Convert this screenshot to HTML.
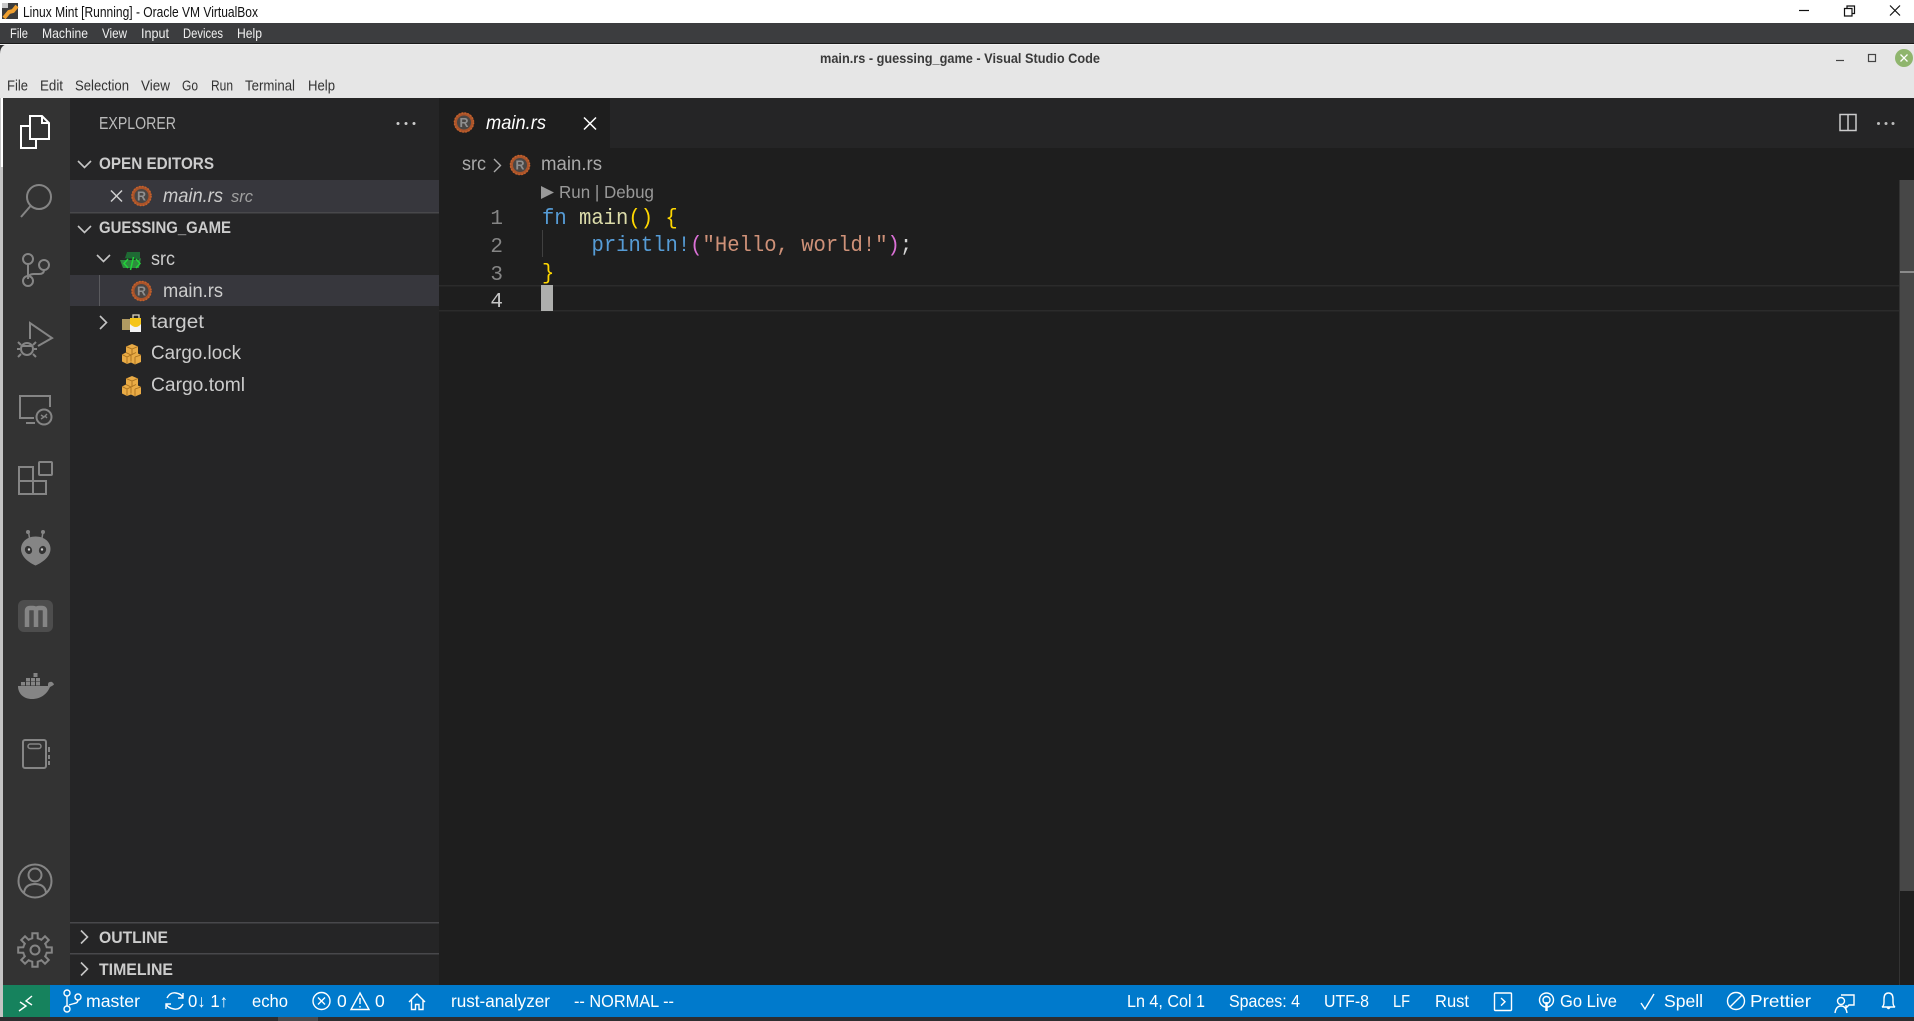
<!DOCTYPE html>
<html lang="en"><head><meta charset="utf-8"><title>main.rs - guessing_game - Visual Studio Code</title>
<style>
html,body{margin:0;padding:0;width:1914px;height:1021px;overflow:hidden;background:#2d2d2f}
svg{display:block}
text{font-family:"Liberation Sans",sans-serif;white-space:pre}
.m{font-family:"Liberation Mono",monospace;font-size:22.6px}
.ln{font-family:"Liberation Mono",monospace;font-size:21px}
.vb{font-size:14px;fill:#f0f0f0}
.mn{font-size:15px;fill:#333}
.sb{font-size:19px;fill:#ccc}
.b{font-size:17px;font-weight:bold;fill:#ccc}
.st{font-size:17.5px;fill:#fff}
.ic{fill:none;stroke:#858585;stroke-width:2}
.w{fill:none;stroke:#fff;stroke-width:1.4}
.ch{fill:none;stroke:#c5c5c5;stroke-width:1.6}
</style></head><body>
<svg width="1914" height="1021" viewBox="0 0 1914 1021" xmlns="http://www.w3.org/2000/svg">
<defs>
<g id="rust"><circle r="8.500" fill="#4a4644" stroke="#a9532a" stroke-width="3"/><circle r="9.500" fill="none" stroke="#c4622c" stroke-width="1.600" stroke-dasharray="1.500 1.500"/><text x="0" y="4.500" text-anchor="middle" style="font-size:12.500px;font-weight:bold;fill:#8f8f8f">R</text></g>
<g id="cargo">
<path d="M10 0l6 2.500v7l3 1.500v7l-6 2.500-4-2-4 1.500L0 17.500v-7l4-2v-6z" fill="#e9ab45"/>
<path d="M4 2.500l6 2.500 6-2.500M10 5v6M4 8.500l5 2.500 5-2.500M0 10.500l5 2.500v6.500M5 13l4-2M9 11v6.500M13 13l6-2M13 13v7" stroke="#a8701e" stroke-width=".9" fill="none"/>
</g>
<path id="t" d="M-4.59-11.09L-2.7-11.69L-2.66-16.79L2.66-16.79L2.7-11.69L4.59-11.09"/>
</defs>

<!-- VirtualBox chrome -->
<rect width="1914" height="1021" fill="#2d2d2f"/>
<rect width="1914" height="23" fill="#fff"/>
<rect x="2" y="3" width="16" height="16" fill="#3c3c3c"/>
<rect x="2" y="3" width="6" height="5" fill="#c9c9c9"/>
<path d="M4 18L9 12L13 11L17 6" stroke="#f0a030" stroke-width="4" fill="none"/>
<text x="23" y="17" textLength="235" lengthAdjust="spacingAndGlyphs" style="font-size:14.5px;fill:#111">Linux Mint [Running] - Oracle VM VirtualBox</text>
<path d="M1799 10.500h10" stroke="#111" stroke-width="1.200"/>
<path d="M1844.500 8.500h7.500v7.500h-7.500z M1847 8.500v-2.500h7.500v7.500h-2.500" fill="none" stroke="#111" stroke-width="1.200"/>
<path d="M1890 5.500l10 10M1900 5.500l-10 10" stroke="#111" stroke-width="1.200"/>
<rect y="23" width="1914" height="20" fill="#3c3d3f"/>
<text class="vb" x="10" y="38" textLength="18" lengthAdjust="spacingAndGlyphs">File</text>
<text class="vb" x="42" y="38" textLength="46" lengthAdjust="spacingAndGlyphs">Machine</text>
<text class="vb" x="102" y="38" textLength="25" lengthAdjust="spacingAndGlyphs">View</text>
<text class="vb" x="141" y="38" textLength="28" lengthAdjust="spacingAndGlyphs">Input</text>
<text class="vb" x="183" y="38" textLength="40" lengthAdjust="spacingAndGlyphs">Devices</text>
<text class="vb" x="237" y="38" textLength="25" lengthAdjust="spacingAndGlyphs">Help</text>

<!-- Mint window title -->
<rect y="43" width="1914" height="2" fill="#1a1a1a"/>
<path d="M0 98V54Q0 44 10 44H1914V98z" fill="#e6e6e6"/>
<rect y="44" width="1914" height="1" fill="#f2f2f2"/>
<text x="960" y="63" text-anchor="middle" textLength="280" lengthAdjust="spacingAndGlyphs" style="font-size:14px;font-weight:bold;fill:#3a3a3a">main.rs - guessing_game - Visual Studio Code</text>
<path d="M1836 60.500h8" stroke="#444" stroke-width="1.200"/>
<rect x="1868.500" y="54.500" width="7" height="7" fill="none" stroke="#444" stroke-width="1.200"/>
<circle cx="1904" cy="58" r="9" fill="#8fb56d"/>
<path d="M1900.500 54.500l7 7M1907.500 54.500l-7 7" stroke="#fff" stroke-width="1.300"/>
<text class="mn" x="7" y="90.500" textLength="21" lengthAdjust="spacingAndGlyphs">File</text>
<text class="mn" x="40" y="90.500" textLength="23" lengthAdjust="spacingAndGlyphs">Edit</text>
<text class="mn" x="75" y="90.500" textLength="54" lengthAdjust="spacingAndGlyphs">Selection</text>
<text class="mn" x="141" y="90.500" textLength="29" lengthAdjust="spacingAndGlyphs">View</text>
<text class="mn" x="182" y="90.500" textLength="16" lengthAdjust="spacingAndGlyphs">Go</text>
<text class="mn" x="211" y="90.500" textLength="22" lengthAdjust="spacingAndGlyphs">Run</text>
<text class="mn" x="245" y="90.500" textLength="50" lengthAdjust="spacingAndGlyphs">Terminal</text>
<text class="mn" x="308" y="90.500" textLength="27" lengthAdjust="spacingAndGlyphs">Help</text>

<!-- VS Code base -->
<rect x="0" y="98" width="3" height="887" fill="#c4c4c4"/>
<rect x="3" y="98" width="67" height="887" fill="#333"/>
<rect x="70" y="98" width="369" height="887" fill="#252526"/>
<rect x="439" y="98" width="1475" height="887" fill="#1e1e1e"/>
<rect x="439" y="98" width="1475" height="50" fill="#252526"/>
<rect x="439" y="98" width="171" height="50" fill="#1e1e1e"/>
<rect x="1" y="98" width="2" height="69" fill="#fff"/>

<!-- activity icons -->
<g fill="none" stroke="#fff" stroke-width="2">
<path d="M30 126h-9v22h15v-9"/>
<path d="M30 116h12l7 7v16h-19zM42 116v7h7"/>
</g>
<g class="ic">
<circle cx="39" cy="197" r="12"/><path d="M30.500 206L21 217"/>
<circle cx="28" cy="259" r="5"/><circle cx="44" cy="265" r="5"/><circle cx="28" cy="281" r="5"/>
<path d="M28 264v12M44 270q0 4-5 4h-5q-6 0-6 5"/>
<path d="M30 339v-16l22 15-14 8"/>
<circle cx="27" cy="349" r="6"/><path d="M21 345l-3-3M33 345l3-3M20 349h-3M34 349h3M21 354l-3 3M33 354l3 3M22 346h10"/>
<path d="M34 418H20v-22h30v11M26 423h9"/>
<circle cx="44" cy="417" r="7.500"/><path d="M41 415l3 2-3 2M47 414l-2 2 2 2" stroke-width="1.400"/>
<path d="M19 467h14v27H19zM19 481h27v13H33"/>
<rect x="39" y="462" width="13" height="13" rx="1"/>
</g>
<g fill="#858585">
<path d="M35.500 536.500c9 0 15 5.500 15 12.500 0 8-9 14-15 16.500-6-2.500-14.500-8.500-14.500-16.500 0-7 6-12.500 14.500-12.500z"/>
<path d="M28.500 532l1 6M43 532l-1 6" stroke="#858585" stroke-width="1.500"/>
<circle cx="28" cy="532" r="2"/><circle cx="43" cy="532" r="2"/>
</g>
<ellipse cx="28.500" cy="550" rx="3.500" ry="4.200" fill="#333" transform="rotate(-25 28.500 550)"/><ellipse cx="42.500" cy="550" rx="3.500" ry="4.200" fill="#333" transform="rotate(25 42.500 550)"/>
<circle cx="29" cy="549.500" r="1.200" fill="#ccc"/><circle cx="42" cy="549.500" r="1.200" fill="#ccc"/>
<rect x="18" y="600" width="35" height="32" rx="6" fill="#4d4d4d"/>
<path d="M27 627v-16q0-3 3-3h3q3 0 3 3v16M36 611q0-3 3-3h3q3 0 3 3v16" fill="none" stroke="#858585" stroke-width="4.500"/>
<g fill="#858585">
<path d="M18 686h30c0-2 0-4 2-4 2-1 3 1 4 2 0 1-2 2-4 3-3 7-9 12-18 12-8 0-14-5-14-13z"/>
<rect x="21" y="682" width="4" height="3.500"/><rect x="26" y="682" width="4" height="3.500"/><rect x="31" y="682" width="4" height="3.500"/><rect x="36" y="682" width="4" height="3.500"/>
<rect x="26" y="678" width="4" height="3.500"/><rect x="31" y="678" width="4" height="3.500"/><rect x="36" y="678" width="4" height="3.500"/>
<rect x="33.500" y="673" width="4" height="4"/>
</g>
<g class="ic">
<rect x="23" y="740" width="23" height="28" rx="2"/>
<rect x="28" y="744" width="13" height="4.500" rx="2.200" stroke-width="1.500"/>
<path d="M49 747v5M49 755v4M49 761v4" stroke-width="2"/>
<circle cx="35" cy="881" r="16.500"/><circle cx="35" cy="875" r="6.500"/><path d="M24 893q1-9 11-9t11 9"/>
<circle cx="35" cy="950" r="4.500"/>
<g transform="translate(35 950)">
<use href="#t"/><use href="#t" transform="rotate(45)"/><use href="#t" transform="rotate(90)"/><use href="#t" transform="rotate(135)"/><use href="#t" transform="rotate(180)"/><use href="#t" transform="rotate(225)"/><use href="#t" transform="rotate(270)"/><use href="#t" transform="rotate(315)"/>
</g>
</g>

<!-- sidebar -->
<text x="99" y="129" textLength="77" lengthAdjust="spacingAndGlyphs" style="font-size:17.5px;fill:#bbb">EXPLORER</text>
<g fill="#ccc"><circle cx="398" cy="123.500" r="1.500"/><circle cx="406" cy="123.500" r="1.500"/><circle cx="414" cy="123.500" r="1.500"/></g>
<path class="ch" d="M78 161l6.500 6.500 6.500-6.500M78 226l6.500 6.500 6.500-6.500"/>
<text class="b" x="99" y="169" textLength="115" lengthAdjust="spacingAndGlyphs">OPEN EDITORS</text>
<rect x="70" y="180" width="369" height="32" fill="#37373d"/>
<rect x="70" y="212" width="369" height="1.500" fill="#48484b"/>
<path d="M111 190.500l11 11M122 190.500l-11 11" stroke="#d0d0d0" stroke-width="1.500"/>
<use href="#rust" x="141.500" y="196"/>
<text x="163" y="202" textLength="60" lengthAdjust="spacingAndGlyphs" style="font-size:19px;font-style:italic;fill:#ccc">main.rs</text>
<text x="231" y="202" textLength="22" lengthAdjust="spacingAndGlyphs" style="font-size:16.5px;font-style:italic;fill:#a0a0a0">src</text>
<text class="b" x="99" y="233" textLength="132" lengthAdjust="spacingAndGlyphs">GUESSING_GAME</text>
<path class="ch" d="M97 255l6.500 6.500 6.500-6.500"/>
<path d="M121 258h4l2-6h13v7" fill="#1f6a34"/>
<path d="M120 260h18l3-2-2 10h-16z" fill="#2e8b3e"/>
<path d="M128 259l-4 4.500 4 4.500M136 259l4 4.500-4 4.500M133.500 257l-3 13" stroke="#22d43a" stroke-width="1.500" fill="none"/>
<text class="sb" x="151" y="265" textLength="24" lengthAdjust="spacingAndGlyphs">src</text>
<rect x="70" y="275" width="369" height="31" fill="#37373d"/>
<rect x="99" y="275" width="1" height="31" fill="#5a5a5e"/>
<use href="#rust" x="141.500" y="291"/>
<text class="sb" x="163" y="297" textLength="60" lengthAdjust="spacingAndGlyphs">main.rs</text>
<path class="ch" d="M100 316l6.500 6.500-6.500 6.500"/>
<rect x="122" y="319" width="14" height="11" fill="#b09a62"/>
<path d="M130 318h11v14h-11z" fill="#f3f3f3"/>
<path d="M130 318h11v6q-5 6-11 0z" fill="#f5c518"/>
<path d="M133 318v-3h6v3" fill="none" stroke="#e0d8c0" stroke-width="1.300"/>
<text class="sb" x="151" y="328" textLength="53" lengthAdjust="spacingAndGlyphs">target</text>
<use href="#cargo" x="122" y="344"/>
<text class="sb" x="151" y="359" textLength="90" lengthAdjust="spacingAndGlyphs">Cargo.lock</text>
<use href="#cargo" x="122" y="376"/>
<text class="sb" x="151" y="391" textLength="94" lengthAdjust="spacingAndGlyphs">Cargo.toml</text>

<rect x="70" y="922" width="369" height="1.500" fill="#48484b"/>
<rect x="70" y="953" width="369" height="1.500" fill="#48484b"/>
<path class="ch" d="M81 930.500l6.500 6.500-6.500 6.500M81 962.500l6.500 6.500-6.500 6.500"/>
<text class="b" x="99" y="943" textLength="69" lengthAdjust="spacingAndGlyphs">OUTLINE</text>
<text class="b" x="99" y="975" textLength="74" lengthAdjust="spacingAndGlyphs">TIMELINE</text>

<!-- tab / breadcrumb -->
<use href="#rust" x="464" y="122.500"/>
<text x="486" y="129" textLength="60" lengthAdjust="spacingAndGlyphs" style="font-size:19px;font-style:italic;fill:#fff">main.rs</text>
<path d="M584 117.500l12 12M596 117.500l-12 12" stroke="#fff" stroke-width="1.500"/>
<path d="M1840 114.500h16v16h-16zM1848 114.500v16" fill="none" stroke="#ccc" stroke-width="1.500"/>
<g fill="#bbb"><circle cx="1878.500" cy="123.500" r="1.500"/><circle cx="1886" cy="123.500" r="1.500"/><circle cx="1893" cy="123.500" r="1.500"/></g>
<text x="462" y="170" textLength="24" lengthAdjust="spacingAndGlyphs" style="font-size:19px;fill:#aaa">src</text>
<path d="M494 159l6.500 6.500-6.500 6.500" fill="none" stroke="#aaa" stroke-width="1.400"/>
<use href="#rust" x="520" y="165"/>
<text x="541" y="170" textLength="61" lengthAdjust="spacingAndGlyphs" style="font-size:19px;fill:#aaa">main.rs</text>

<!-- editor -->
<path d="M541 186l13 6.500-13 6.500z" fill="#999"/>
<text x="559" y="198" textLength="95" lengthAdjust="spacingAndGlyphs" style="font-size:17.5px;fill:#999">Run | Debug</text>
<rect x="439" y="285" width="1460" height="1.500" fill="#2b2b2b"/>
<rect x="439" y="310" width="1460" height="1.500" fill="#2b2b2b"/>
<rect x="541" y="285" width="12" height="26" fill="#aeafad"/>
<rect x="542" y="230" width="1" height="27" fill="#404040"/>
<text class="ln" x="503" y="224" fill="#858585" text-anchor="end">1</text>
<text class="ln" x="503" y="252" fill="#858585" text-anchor="end">2</text>
<text class="ln" x="503" y="280" fill="#858585" text-anchor="end">3</text>
<text class="ln" x="503" y="307" fill="#c6c6c6" text-anchor="end">4</text>
<text class="m" transform="translate(542 224) scale(.91 1)"><tspan fill="#569cd6">fn</tspan> <tspan fill="#dcdcaa">main</tspan><tspan fill="#ffd700">()</tspan> <tspan fill="#ffd700">{</tspan></text>
<text class="m" transform="translate(591.500 251) scale(.91 1)"><tspan fill="#569cd6">println!</tspan><tspan fill="#da70d6">(</tspan><tspan fill="#ce9178">"Hello, world!"</tspan><tspan fill="#da70d6">)</tspan><tspan fill="#d4d4d4">;</tspan></text>
<text class="m" transform="translate(542 279) scale(.91 1)" fill="#ffd700">}</text>

<!-- scrollbar -->
<rect x="1899" y="180" width="1" height="805" fill="#333"/>
<rect x="1900" y="180" width="14" height="711" fill="#474747"/>
<rect x="1900" y="271" width="14" height="2" fill="#8a8a8a"/>

<!-- status bar -->
<rect y="985" width="1914" height="32" fill="#007acc"/>
<rect x="0" y="985" width="3" height="32" fill="#c4c4c4"/>
<rect x="3" y="985" width="47" height="32" fill="#16825d"/>
<rect x="278" y="1017" width="40" height="4" fill="#4a4a4c"/>
<path d="M20 1002l6 4-7 5M32 996l-6 5 6 4" class="w"/>
<g class="w">
<circle cx="67" cy="993" r="3"/><circle cx="67" cy="1009" r="3"/><circle cx="78" cy="997" r="3"/>
<path d="M67 996v10M78 1000q0 3-4 3.500l-5 1.500"/>
<path d="M167 998q3-6 9-5t7 5M183 1004q-3 6-9 5t-8-5M183 993v5h-5M166 1009v-5h5"/>
<circle cx="321.500" cy="1001" r="8.500"/><path d="M318 997.500l7 7M325 997.500l-7 7"/>
<path d="M360 993l9 16.500h-18zM360 998v6M360 1006v1.500"/>
<path d="M409 1002l8-8 8 8M411.500 1000v9.500h4v-5h3.500v5h4v-9.500"/>
<rect x="1494.500" y="993" width="17" height="17.500" rx="1"/><path d="M1501 998l4 3.800-4 3.800"/>
<circle cx="1546.500" cy="1000" r="7"/><circle cx="1546.500" cy="1000" r="3.500"/>
<path d="M1546.500 1002v9" stroke-width="2.500"/>
<path d="M1641 1003l4 6 9-15"/>
<circle cx="1736" cy="1001" r="8.500"/><path d="M1730 1007l12-12"/>
<path d="M1841 995h13v10h-5l-3 3v-3"/><circle cx="1841" cy="1001" r="3.500"/><path d="M1835 1013q1-7 6-7t6 7"/>
<path d="M1882 1007q2-1 2-5v-3q0-6 4.500-6t4.500 6v3q0 4 2 5zM1887 1007q1.500 3 3 0"/>
</g>
<text class="st" x="86" y="1007" textLength="54" lengthAdjust="spacingAndGlyphs">master</text>
<text class="st" x="188" y="1007" textLength="40" lengthAdjust="spacingAndGlyphs">0↓ 1↑</text>
<text class="st" x="252" y="1007" textLength="36" lengthAdjust="spacingAndGlyphs">echo</text>
<text class="st" x="337" y="1007">0</text>
<text class="st" x="375" y="1007">0</text>
<text class="st" x="451" y="1007" textLength="99" lengthAdjust="spacingAndGlyphs">rust-analyzer</text>
<text class="st" x="574" y="1007" textLength="100" lengthAdjust="spacingAndGlyphs">-- NORMAL --</text>
<text class="st" x="1127" y="1007" textLength="78" lengthAdjust="spacingAndGlyphs">Ln 4, Col 1</text>
<text class="st" x="1229" y="1007" textLength="71" lengthAdjust="spacingAndGlyphs">Spaces: 4</text>
<text class="st" x="1324" y="1007" textLength="45" lengthAdjust="spacingAndGlyphs">UTF-8</text>
<text class="st" x="1393" y="1007" textLength="17" lengthAdjust="spacingAndGlyphs">LF</text>
<text class="st" x="1435" y="1007" textLength="34" lengthAdjust="spacingAndGlyphs">Rust</text>
<text class="st" x="1560" y="1007" textLength="57" lengthAdjust="spacingAndGlyphs">Go Live</text>
<text class="st" x="1664" y="1007" textLength="39" lengthAdjust="spacingAndGlyphs">Spell</text>
<text class="st" x="1750" y="1007" textLength="61" lengthAdjust="spacingAndGlyphs">Prettier</text>
</svg>
</body></html>
